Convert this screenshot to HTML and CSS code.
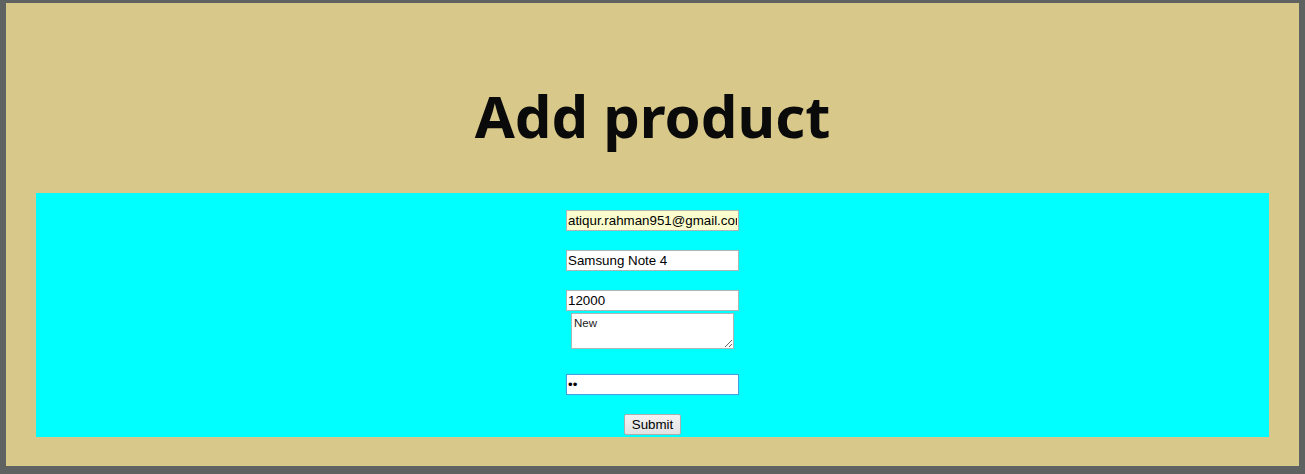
FILE: index.html
```html
<!DOCTYPE html>
<html>
<head>
<meta charset="utf-8">
<link rel="stylesheet" href="styles.css">
</head>
<body>
<div class="page">
  <header class="head"><h1 class="title">Add product</h1></header>
  <form class="form">
    <input class="field autofill" type="text" value="atiqur.rahman951@gmail.com">
    <input class="field gap" type="text" value="Samsung Note 4">
    <input class="field gap" type="text" value="12000">
    <textarea class="desc">New</textarea>
    <input class="field pass" type="password" value="12">
    <button class="submit" type="button">Submit</button>
  </form>
</div>
</body>
</html>
```
FILE: styles.css
```css
html { background: #5e6361; }
body { margin: 0; }
.page {
  margin: 3px 6px 8px 6px;
  height: 463px;
  background: #d8c88a;
  display: flex;
  flex-direction: column;
}
.head {
  height: 190px;
  display: flex;
  align-items: center;
  justify-content: center;
}
.title {
  margin: 0;
  font-family: "Noto Sans", sans-serif;
  font-weight: 700;
  font-size: 58px;
  color: #0a0a0a;
  line-height: 1;
  padding-top: 36px;
}
.form {
  margin: 0 30px;
  height: 244px;
  box-sizing: border-box;
  background: #00ffff;
  padding-top: 17px;
  display: flex;
  flex-direction: column;
  align-items: center;
}
.field {
  box-sizing: border-box;
  width: 173px;
  height: 21px;
  margin: 0;
  padding: 1px 1px;
  border: 1px solid #a9b7b7;
  background: #fff;
  font-family: "Liberation Sans", Arial, sans-serif;
  font-size: 13.33px;
  color: #000;
  outline: none;
}
.autofill { background: #fafccd; }
.gap { margin-top: 19px; }
.desc {
  box-sizing: border-box;
  width: 163px;
  height: 36px;
  margin-top: 2px;
  padding: 3px 2px;
  border: 1px solid #a9b7b7;
  background: #fff;
  font-family: "Liberation Sans", Arial, sans-serif;
  font-size: 11.5px;
  color: #222;
  resize: both;
  outline: none;
}
.pass {
  margin-top: 25px;
  border: 1px solid #3ea0e6;
  box-shadow: 0 0 1px #6bb8ee;
}
.submit {
  margin-top: 19px;
  width: 57px;
  height: 21px;
  padding: 0;
  border: 1px solid #adadad;
  border-radius: 2px;
  background: linear-gradient(#f2f2f2, #e2e2e2);
  font-family: "Liberation Sans", Arial, sans-serif;
  font-size: 13.33px;
  color: #000;
}
```
